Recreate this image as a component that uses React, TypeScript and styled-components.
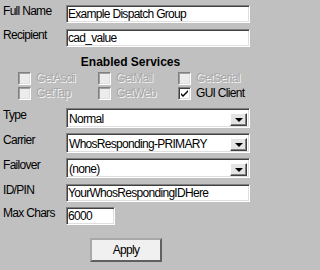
import React from "react";
import styled, { createGlobalStyle } from "styled-components";

const Global = createGlobalStyle`
  html, body { margin: 0; padding: 0; background: #c0c0c0; }
  body { font-family: "Liberation Sans", Arial, sans-serif; }
`;

const Panel = styled.div`
  width: 256px;
  height: 270px;
  background: #c0c0c0;
  box-sizing: border-box;
  padding: 5px 6px 0 3px;
  display: flex;
  flex-direction: column;
  font-size: 12px;
  letter-spacing: -0.7px;
  color: #000;
`;

const Row = styled.div<{ $mt?: number }>`
  display: flex;
  align-items: flex-start;
  margin-top: ${(p) => p.$mt ?? 0}px;
`;

const Label = styled.div<{ $pt?: number }>`
  width: 63px;
  flex: none;
  line-height: 13px;
  padding-top: ${(p) => p.$pt ?? 0}px;
  white-space: nowrap;
`;

const sunken = `
  box-sizing: border-box;
  border: 1px solid;
  border-color: #808080 #ffffff #ffffff #808080;
  box-shadow: inset 1px 1px #404040, inset -1px -1px #dfdfdf;
  background: #fff;
`;

const Field = styled.div<{ $w?: number }>`
  ${sunken}
  width: ${(p) => p.$w ?? 184}px;
  height: 18px;
  padding: 1px 2px 0 1px;
  line-height: 14px;
  white-space: nowrap;
  overflow: hidden;
`;

const Select = styled.div`
  ${sunken}
  width: 184px;
  height: 20px;
  padding: 4px 2px 1px 2px;
  display: flex;
  align-items: stretch;
  justify-content: space-between;
`;

const SelectText = styled.span`
  line-height: 13px;
  white-space: nowrap;
`;

const DropButton = styled.div`
  box-sizing: border-box;
  width: 17px;
  background: #e4e4e4;
  border: 1px solid;
  border-color: #ffffff #404040 #404040 #ffffff;
  box-shadow: inset -1px -1px #808080;
  display: flex;
  align-items: center;
  justify-content: center;
`;

const Arrow = styled.span`
  width: 0;
  height: 0;
  border-left: 4px solid transparent;
  border-right: 4px solid transparent;
  border-top: 4px solid #000;
  margin-top: 1px;
`;

const Heading = styled.div`
  margin-top: 8px;
  padding-left: 8px;
  text-align: center;
  font-weight: bold;
  font-size: 12px;
  letter-spacing: 0;
  line-height: 14px;
`;

const Checks = styled.div`
  margin-top: 3px;
  padding-left: 15px;
  display: grid;
  grid-template-columns: 80px 80px 80px;
  row-gap: 2px;
`;

const CheckItem = styled.div<{ $disabled?: boolean }>`
  display: flex;
  align-items: center;
  gap: 5px;
  height: 13px;
  color: ${(p) => (p.$disabled ? "#a8a8a8" : "#000")};
  text-shadow: ${(p) => (p.$disabled ? "1px 1px 0 #f4f4f4" : "none")};
`;

const Box = styled.div<{ $disabled?: boolean }>`
  box-sizing: border-box;
  width: 13px;
  height: 13px;
  flex: none;
  border: 1px solid;
  border-color: #808080 #ffffff #ffffff #808080;
  box-shadow: inset 1px 1px ${(p) => (p.$disabled ? "#a0a0a0" : "#404040")},
    inset -1px -1px #dfdfdf;
  background: ${(p) => (p.$disabled ? "#ececec" : "#fff")};
  display: flex;
  align-items: center;
  justify-content: center;
`;

const CheckText = styled.span`
  line-height: 13px;
  white-space: nowrap;
`;

const ButtonRow = styled.div`
  margin-top: 13px;
  padding-left: 87px;
  display: flex;
`;

const Button = styled.div`
  box-sizing: border-box;
  width: 72px;
  height: 24px;
  background: #f0f0f0;
  border: 2px solid;
  border-color: #a8a8a8 #606060 #606060 #a8a8a8;
  display: flex;
  align-items: center;
  justify-content: center;
`;

type CheckProps = { label: string; checked?: boolean; disabled?: boolean };

const Check = ({ label, checked, disabled }: CheckProps) => (
  <CheckItem $disabled={disabled}>
    <Box $disabled={disabled}>
      {checked && (
        <svg width="9" height="9" viewBox="0 0 9 9">
          <path d="M1 4 L3 6 L8 1 L8 3 L3 8 L1 6 Z" fill="#000" />
        </svg>
      )}
    </Box>
    <CheckText>{label}</CheckText>
  </CheckItem>
);

const Drop = ({ value }: { value: string }) => (
  <Select>
    <SelectText>{value}</SelectText>
    <DropButton>
      <Arrow />
    </DropButton>
  </Select>
);

export default function App() {
  return (
    <>
      <Global />
      <Panel>
        <Row>
          <Label>Full Name</Label>
          <Field>Example Dispatch Group</Field>
        </Row>
        <Row $mt={6}>
          <Label>Recipient</Label>
          <Field>cad_value</Field>
        </Row>
        <Heading>Enabled Services</Heading>
        <Checks>
          <Check label="GetAscii" disabled />
          <Check label="GetMail" disabled />
          <Check label="GetSerial" disabled />
          <Check label="GetTap" disabled />
          <Check label="GetWeb" disabled />
          <Check label="GUI Client" checked />
        </Checks>
        <Row $mt={8}>
          <Label $pt={1}>Type</Label>
          <Drop value="Normal" />
        </Row>
        <Row $mt={5}>
          <Label $pt={1}>Carrier</Label>
          <Drop value="WhosResponding-PRIMARY" />
        </Row>
        <Row $mt={5}>
          <Label $pt={1}>Failover</Label>
          <Drop value="(none)" />
        </Row>
        <Row $mt={6}>
          <Label>ID/PIN</Label>
          <Field>YourWhosRespondingIDHere</Field>
        </Row>
        <Row $mt={5}>
          <Label>Max Chars</Label>
          <Field $w={49}>6000</Field>
        </Row>
        <ButtonRow>
          <Button>Apply</Button>
        </ButtonRow>
      </Panel>
    </>
  );
}
